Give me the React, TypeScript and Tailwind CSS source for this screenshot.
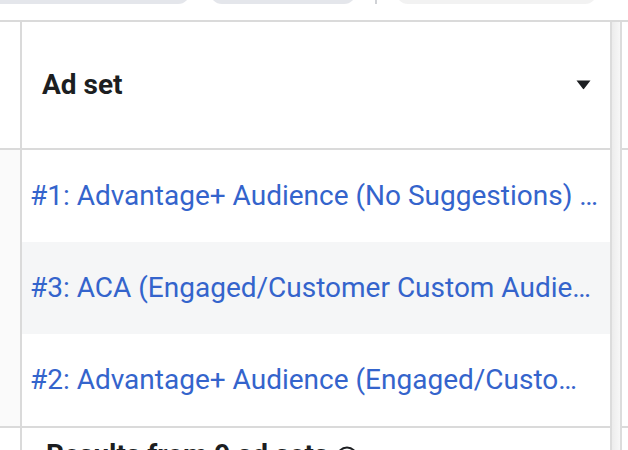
import React from 'react';

const rows = [
  { name: '#1: Advantage+ Audience (No Suggestions) - Broad', shaded: false, h: 'h-[92px]' },
  { name: '#3: ACA (Engaged/Customer Custom Audiences)', shaded: true, h: 'h-[92px]' },
  { name: '#2: Advantage+ Audience (Engaged/Customer Custom Audiences)', shaded: false, h: 'h-[94px]' },
];

function Caret() {
  return (
    <svg width="15" height="10" viewBox="0 0 15 10" className="shrink-0">
      <path d="M0.5 0.5h14L8.3 8.6a1 1 0 0 1-1.6 0z" fill="#1c1e21" />
    </svg>
  );
}

function Band() {
  return (
    <div className="w-[12px] shrink-0 border-l-2 border-r-2 border-[#dcdcdc] bg-gradient-to-r from-[#ececec] to-[#f7f7f7]" />
  );
}

export default function App() {
  return (
    <div className="w-[628px] h-[450px] overflow-hidden bg-white font-['Roboto',sans-serif] text-[#1c1e21]">
      {/* toolbar, cut off at the top */}
      <div className="h-[20px] overflow-hidden">
        <div className="flex items-start -mt-[36px]">
          <div className="h-[40px] w-[210px] -ml-[20px] rounded-[12px] bg-[#e4e6eb]" />
          <div className="h-[40px] w-[146px] ml-[20px] rounded-[12px] bg-[#e4e6eb]" />
          <div className="h-[40px] w-[2px] ml-[19px] bg-[#d0d2d6]" />
          <div className="h-[40px] w-[201px] ml-[19px] rounded-[12px] bg-[#f2f2f2]" />
        </div>
      </div>

      <div className="border-t-2 border-[#dadada]">
        {/* header */}
        <div className="flex h-[128px]">
          <div className="w-[22px] shrink-0 border-r-2 border-b-2 border-[#dadada] bg-white" />
          <div className="flex-1 flex items-center justify-between pl-[20px] pr-[19px] border-b-2 border-[#dadada]">
            <span className="text-[28px] font-bold leading-none">Ad set</span>
            <Caret />
          </div>
          <Band />
          <div className="w-[6px] shrink-0 border-b-2 border-[#dadada]" />
        </div>

        {rows.map((r, i) => {
          const last = i === rows.length - 1;
          return (
            <div key={r.name} className={`flex ${r.h}`}>
              <div className={`w-[22px] shrink-0 border-r-2 border-[#dadada] bg-[#fafafa] ${last ? 'border-b-2' : ''}`} />
              <div
                className={`flex-1 min-w-0 flex items-center pl-[8px] pr-[11px] ${r.shaded ? 'bg-[#f5f6f7]' : 'bg-white'} ${last ? 'border-b-2 border-[#dadada]' : ''}`}
              >
                <span className="truncate text-[28px] leading-[34px] text-[#3464cc]">{r.name}</span>
              </div>
              <Band />
              <div className={`w-[6px] shrink-0 ${last ? 'border-b-2 border-[#dadada]' : ''}`} />
            </div>
          );
        })}

        {/* summary row */}
        <div className="flex h-[60px]">
          <div className="w-[22px] shrink-0 border-r-2 border-[#dadada] bg-white" />
          <div className="flex-1 flex items-start gap-2 pl-[24px] pt-[11px]">
            <span className="text-[28px] font-bold leading-[32px]">Results from 9 ad sets</span>
            <svg width="22" height="22" viewBox="0 0 22 22" className="mt-[7px]">
              <circle cx="11" cy="11" r="9.5" fill="none" stroke="#1c1e21" strokeWidth="2" />
            </svg>
          </div>
          <Band />
          <div className="w-[6px] shrink-0" />
        </div>
      </div>
    </div>
  );
}
